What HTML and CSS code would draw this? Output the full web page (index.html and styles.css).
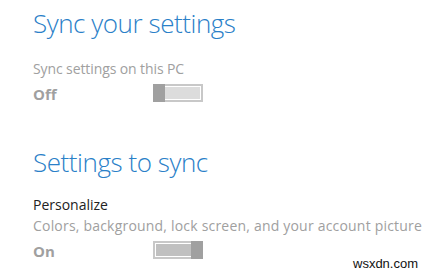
FILE: index.html
```html
<!DOCTYPE html>
<html>
<head>
<meta charset="utf-8">
<link rel="stylesheet" href="styles.css">
</head>
<body>
<div class="page">
  <h1 class="title">Sync your settings</h1>
  <div class="label muted first">Sync settings on this PC</div>
  <div class="toggle-row">
    <span class="state">Off</span>
    <span class="toggle off"><span class="track"></span><span class="thumb"></span></span>
  </div>

  <h1 class="title second">Settings to sync</h1>
  <div class="label dark item">Personalize</div>
  <div class="label muted desc">Colors, background, lock screen, and your account picture</div>
  <div class="toggle-row">
    <span class="state">On</span>
    <span class="toggle on"><span class="track"></span><span class="thumb"></span></span>
  </div>
</div>
<div class="watermark">wsxdn.com</div>
</body>
</html>
```
FILE: styles.css
```css
html, body {
  margin: 0;
  padding: 0;
  background: #ffffff;
  width: 426px;
  height: 273px;
  overflow: hidden;
}
body {
  position: relative;
  font-family: "Open Sans", "Noto Sans", sans-serif;
}
.page {
  padding: 6px 0 0 33px;
}
.title {
  margin: 0;
  font-weight: 300;
  font-size: 26px;
  line-height: 34px;
  letter-spacing: -0.45px;
  color: #2a80c8;
  white-space: nowrap;
}
.title.second {
  margin-top: 41px;
}
.label {
  font-size: 14px;
  line-height: 20px;
  white-space: nowrap;
}
.label.first {
  margin-top: 19px;
  letter-spacing: -0.1px;
}
.label.item {
  margin-top: 16px;
}
.label.desc {
  margin-top: 1px;
  letter-spacing: 0.2px;
}
.muted { color: #a0a0a0; }
.dark { color: #222222; }
.toggle-row {
  display: flex;
  align-items: flex-start;
  margin-top: 5px;
}
.state {
  width: 120px;
  font-size: 15px;
  line-height: 20px;
  font-weight: 700;
  color: #a0a0a0;
}
.toggle {
  display: flex;
  width: 50px;
  height: 18px;
  box-sizing: border-box;
  border: 2px solid #c8c8c8;
  position: relative;
}
.toggle .track {
  flex: 1;
  border: 1px solid #ffffff;
  background: #dcdcdc;
}
.toggle .thumb {
  position: absolute;
  top: -2px;
  width: 12px;
  height: 18px;
  background: #a0a0a0;
}
.toggle.off .thumb { left: -2px; }
.toggle.on .thumb { right: -2px; }
.toggle.on .track { background: #c0c0c0; }
.watermark {
  position: absolute;
  left: 353px;
  top: 256px;
  font-family: "Liberation Sans", sans-serif;
  font-size: 13px;
  line-height: 15px;
  color: #111;
}
```
